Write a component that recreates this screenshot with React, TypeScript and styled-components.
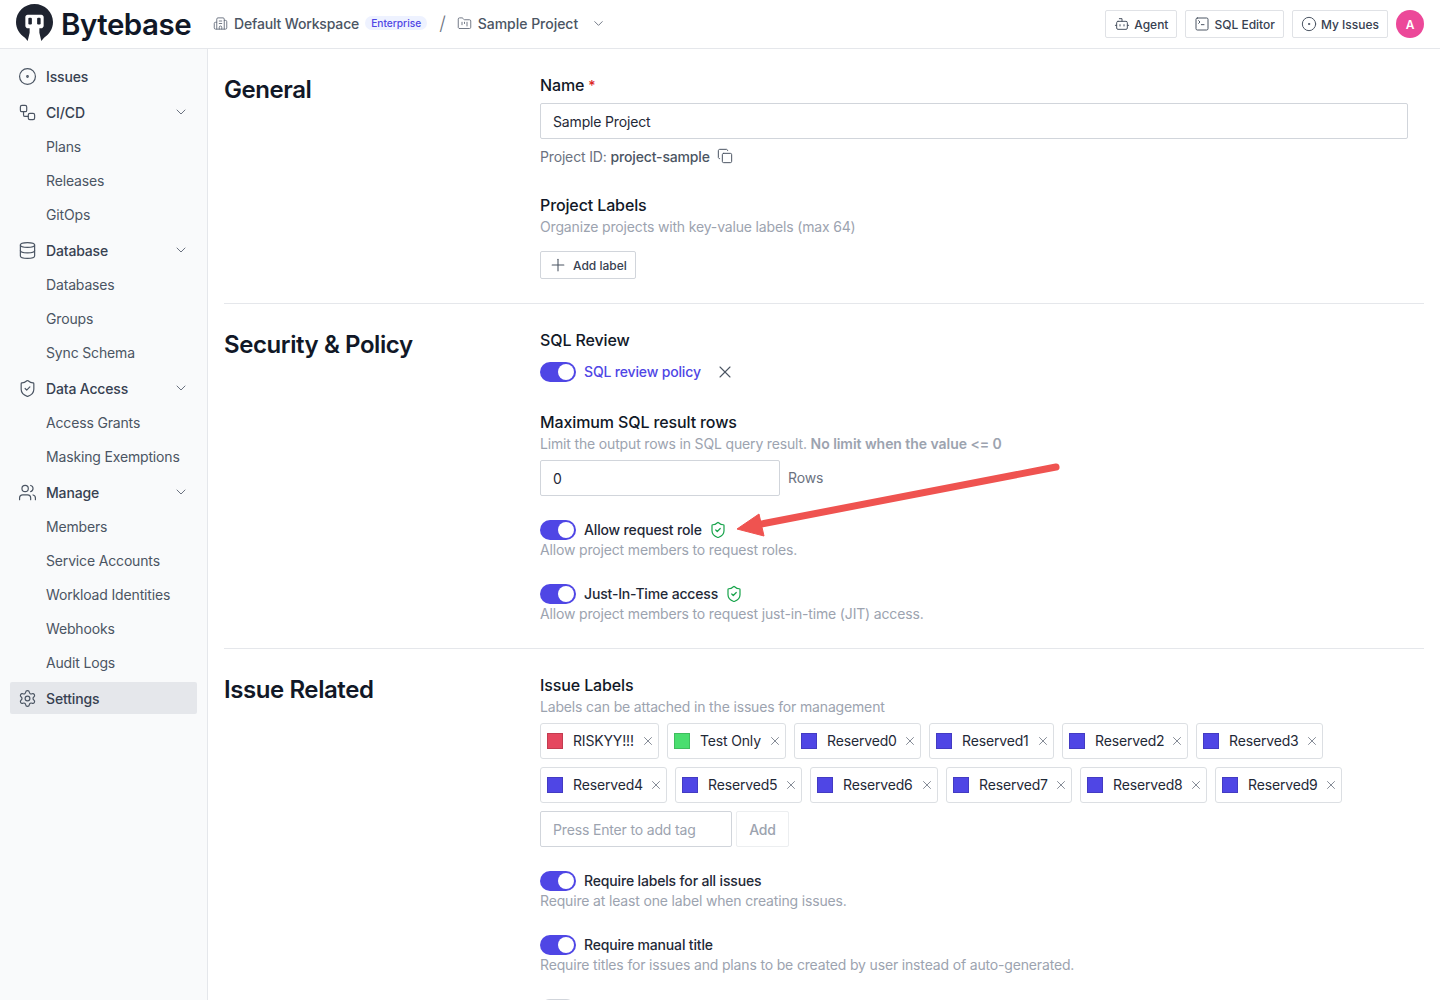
import React from "react";
import styled, { createGlobalStyle } from "styled-components";
import {
  Bot, Building2, ChevronDown, CircleDot, Copy, Database, FolderKanban, Plus,
  Settings as SettingsIcon, ShieldCheck, SquareTerminal, Users, Workflow, X,
} from "lucide-react";

const Global = createGlobalStyle`
  html, body { margin: 0; padding: 0; height: 100%; overflow: hidden; background: #fff; }
  body { font-family: Inter, "Liberation Sans", sans-serif; color: #1f2937; letter-spacing: -0.16px; -webkit-font-smoothing: antialiased; }
  * { box-sizing: border-box; }
`;

const Page = styled.div`
  position: relative;
  height: 1000px;
  width: 1440px;
  overflow: hidden;
  display: flex;
  flex-direction: column;
`;

const Header = styled.header`
  height: 49px;
  flex: none;
  display: flex;
  align-items: center;
  padding: 0 16px;
  border-bottom: 1px solid #e5e7eb;
  background: #fff;
`;

const LogoLink = styled.div`
  display: flex;
  align-items: center;
  width: 197px;
  flex: none;
  svg { margin-bottom: 3px; flex: none; }
`;

const LogoText = styled.span`
  margin-left: 8px;
  font-size: 29.5px;
  font-weight: 600;
  letter-spacing: -0.5px;
  line-height: 36px;
  color: #111827;
`;

const Crumb = styled.div<{ $wide?: boolean }>`
  display: flex;
  align-items: center;
  gap: 6px;
  margin-bottom: 2px;
  font-size: 14px;
  font-weight: 500;
  letter-spacing: ${(p) => (p.$wide ? "-0.02px" : "-0.16px")};
  color: #4b5563;
  white-space: nowrap;
  svg { color: #6b7280; flex: none; }
`;

const PlanBadge = styled.span`
  height: 14px;
  padding: 0 6px;
  border-radius: 7px;
  background: #eef2ff;
  color: #4f46e5;
  font-size: 10.2px;
  letter-spacing: 0;
  font-weight: 500;
  line-height: 14px;
`;

const Slash = styled.span`
  margin: 0 11px 2px 12px;
  font-size: 19px;
  font-weight: 300;
  color: #6b7280;
`;

const CrumbChevron = styled.span`
  display: flex;
  margin-left: 7px;
  color: #9ca3af;
`;

const HeaderActions = styled.div`
  margin-left: auto;
  display: flex;
  align-items: center;
  gap: 8px;
`;

const ActionButton = styled.button`
  height: 28px;
  padding: 0 8px;
  display: flex;
  align-items: center;
  gap: 4px;
  background: #fff;
  border: 1px solid #e0e2e6;
  border-radius: 2px;
  color: #374151;
  font: 500 12px Inter, sans-serif;
  svg { color: #4b5563; flex: none; }
`;

const Avatar = styled.div`
  width: 28px;
  height: 28px;
  border-radius: 50%;
  background: #ec4899;
  color: #fff;
  font-size: 12px;
  font-weight: 600;
  display: flex;
  align-items: center;
  justify-content: center;
`;

const Body = styled.div`
  flex: 1;
  min-height: 0;
  display: flex;
`;

const Sidebar = styled.nav`
  width: 208px;
  flex: none;
  padding: 8px 10px 0;
  background: #f9fafb;
  border-right: 1px solid #e5e7eb;
`;

const NavParent = styled.div<{ $active?: boolean }>`
  height: ${(p) => (p.$active ? 32 : 34)}px;
  margin: ${(p) => (p.$active ? "3px 0 0" : "2px 0 0")};
  padding: 0 8px;
  display: flex;
  align-items: center;
  border-radius: 2px;
  background: ${(p) => (p.$active ? "#e5e7eb" : "transparent")};
  color: #374151;
  font-size: 14px;
  font-weight: 500;
  svg { flex: none; color: #4b5563; }
`;

const NavLabel = styled.span`
  margin-left: 9px;
  flex: 1;
`;

const NavChevron = styled.span`
  display: flex;
  svg { color: #6b7280; }
`;

const NavChild = styled.div`
  height: 34px;
  padding-left: 36px;
  display: flex;
  align-items: center;
  color: #4b5563;
  font-size: 14px;
  font-weight: 400;
`;

const Main = styled.main`
  flex: 1;
  min-width: 0;
  padding: 0 16px;
`;

const Section = styled.section<{ $pad: number; $height: number; $line?: boolean }>`
  display: grid;
  grid-template-columns: 316px 868px;
  align-items: start;
  height: ${(p) => p.$height}px;
  padding-top: ${(p) => p.$pad}px;
  border-bottom: ${(p) => (p.$line ? "1px solid #e5e7eb" : "none")};
`;

const SectionTitle = styled.h1`
  margin: 1px 0 0;
  font-size: 24px;
  line-height: 32px;
  font-weight: 600;
  letter-spacing: -0.42px;
  color: #111827;
`;

const Column = styled.div`
  display: flex;
  flex-direction: column;
  align-items: flex-start;
`;

const Label = styled.div<{ $top?: number }>`
  margin-top: ${(p) => p.$top ?? 0}px;
  font-size: 16px;
  line-height: 24px;
  font-weight: 500;
  letter-spacing: -0.12px;
  color: #111827;
`;

const Required = styled.span`
  margin-left: 4px;
  color: #dc2626;
  font-size: 14px;
`;

const Hint = styled.div`
  font-size: 14px;
  line-height: 20px;
  color: #9ca3af;
  b { font-weight: 600; letter-spacing: -0.05px; }
`;

const TextBox = styled.div<{ $w: number; $top?: number; $muted?: boolean }>`
  width: ${(p) => p.$w}px;
  height: 36px;
  margin-top: ${(p) => p.$top ?? 0}px;
  padding: 0 12px;
  display: flex;
  align-items: center;
  border: 1px solid #d1d5db;
  border-radius: 2px;
  background: #fff;
  font-size: 14px;
  color: ${(p) => (p.$muted ? "#9ca3af" : "#1f2937")};
`;

const IdRow = styled.div`
  margin-top: 7px;
  display: flex;
  align-items: center;
  height: 20px;
  font-size: 14px;
  color: #6b7280;
  b { margin-left: 4px; font-weight: 500; color: #4b5563; }
  svg { margin-left: 7px; color: #4b5563; }
`;

const OutlineButton = styled.button`
  margin-top: 14px;
  width: 96px;
  height: 28px;
  padding: 0 0 0 7px;
  display: flex;
  align-items: center;
  gap: 5px;
  background: #fff;
  border: 1px solid #d1d5db;
  border-radius: 2px;
  font: 500 12px Inter, sans-serif;
  color: #374151;
  svg { color: #4b5563; }
`;

const Track = styled.span`
  position: relative;
  display: inline-block;
  width: 36px;
  height: 20px;
  flex: none;
  border-radius: 10px;
  background: #4f46e5;
  &::after {
    content: "";
    position: absolute;
    top: 2px;
    right: 2px;
    width: 16px;
    height: 16px;
    border-radius: 50%;
    background: #fff;
  }
`;

const ToggleRow = styled.div<{ $top?: number }>`
  margin-top: ${(p) => p.$top ?? 0}px;
  height: 20px;
  display: flex;
  align-items: center;
  font-size: 14px;
  font-weight: 500;
  color: #1f2937;
`;

const ToggleText = styled.span<{ $link?: boolean }>`
  margin: 0 0 2px 8px;
  color: ${(p) => (p.$link ? "#4f46e5" : "#1f2937")};
`;

const Shield = styled.span`
  display: flex;
  margin-left: 7px;
  color: #16a34a;
`;

const Dismiss = styled.span`
  display: flex;
  margin-left: 14px;
  color: #4b5563;
`;

const InputRow = styled.div`
  margin-top: 6px;
  display: flex;
  align-items: center;
  gap: 8px;
`;

const Unit = styled.span`
  margin-bottom: 2px;
  font-size: 14px;
  color: #6b7280;
`;

const TagRows = styled.div`
  margin-top: 6px;
  display: flex;
  flex-wrap: wrap;
  gap: 8px;
  width: 868px;
`;

const Tag = styled.div<{ $w: number }>`
  width: ${(p) => p.$w}px;
  height: 36px;
  padding: 0 3px 0 6px;
  display: flex;
  align-items: center;
  border: 1px solid #dcdfe3;
  border-radius: 3px;
  font-size: 14px;
  color: #1f2937;
  background: #fff;
`;

const Swatch = styled.span<{ $color: string }>`
  width: 16px;
  height: 16px;
  flex: none;
  background: ${(p) => p.$color};
  border: 1px solid rgba(0, 0, 0, 0.15);
`;

const TagName = styled.span`
  margin: 0 0 2px 10px;
  flex: 1;
  white-space: nowrap;
`;

const TagClose = styled.span`
  display: flex;
  color: #6b7280;
`;

const AddRow = styled.div`
  margin-top: 8px;
  display: flex;
  gap: 4px;
`;

const AddButton = styled.div`
  width: 53px;
  height: 36px;
  display: flex;
  align-items: center;
  justify-content: center;
  border: 1px solid #eceef0;
  border-radius: 2px;
  font-size: 14px;
  font-weight: 500;
  color: #9ca3af;
`;

const OffTrack = styled.span`
  display: block;
  margin-top: 24px;
  width: 36px;
  height: 20px;
  border-radius: 10px;
  background: #d1d5db;
`;

const ArrowLayer = styled.svg`
  position: absolute;
  left: 0;
  top: 0;
  pointer-events: none;
`;

const Logo = () => (
  <svg width="37" height="37" viewBox="0 0 38 38" aria-hidden="true">
    <path
      d="M19 0C8.5 0 0 8.3 0 18.6c0 6.8 3.7 12.7 9.2 16L12 38l2-8.6V25h-1.7c-1.5 0-2.7-1.2-2.7-2.7V13.4c0-1.3 1-2.4 2.4-2.4h14c1.3 0 2.4 1 2.4 2.4v8.9c0 1.5-1.2 2.7-2.7 2.7H24v4.4l2 8.6 2.8-3.4c5.5-3.3 9.2-9.2 9.2-16C38 8.3 29.5 0 19 0Z"
      fill="#1f2430"
    />
    <rect x="12.7" y="14" width="3.6" height="7" rx="1.2" fill="#1f2430" />
    <rect x="21.7" y="14" width="3.6" height="7" rx="1.2" fill="#1f2430" />
  </svg>
);

type NavNode = { label: string; icon: React.ReactNode; open?: boolean; active?: boolean; children?: string[] };

const ico = { size: 19, strokeWidth: 1.5 };

const nav: NavNode[] = [
  { label: "Issues", icon: <CircleDot {...ico} /> },
  { label: "CI/CD", icon: <Workflow {...ico} />, open: true, children: ["Plans", "Releases", "GitOps"] },
  { label: "Database", icon: <Database {...ico} />, open: true, children: ["Databases", "Groups", "Sync Schema"] },
  { label: "Data Access", icon: <ShieldCheck {...ico} />, open: true, children: ["Access Grants", "Masking Exemptions"] },
  { label: "Manage", icon: <Users {...ico} />, open: true, children: ["Members", "Service Accounts", "Workload Identities", "Webhooks", "Audit Logs"] },
  { label: "Settings", icon: <SettingsIcon {...ico} />, active: true },
];

const tags: { name: string; color: string; w: number }[] = [
  { name: "RISKYY!!!", color: "#e5475f", w: 119 },
  { name: "Test Only", color: "#4ade6f", w: 119 },
  { name: "Reserved0", color: "#4f46e5", w: 127 },
  { name: "Reserved1", color: "#4f46e5", w: 125 },
  { name: "Reserved2", color: "#4f46e5", w: 126 },
  { name: "Reserved3", color: "#4f46e5", w: 127 },
  { name: "Reserved4", color: "#4f46e5", w: 127 },
  { name: "Reserved5", color: "#4f46e5", w: 127 },
  { name: "Reserved6", color: "#4f46e5", w: 128 },
  { name: "Reserved7", color: "#4f46e5", w: 126 },
  { name: "Reserved8", color: "#4f46e5", w: 127 },
  { name: "Reserved9", color: "#4f46e5", w: 127 },
];

export default function App() {
  return (
    <Page>
      <Global />
      <Header>
        <LogoLink>
          <Logo />
          <LogoText>Bytebase</LogoText>
        </LogoLink>
        <Crumb>
          <Building2 size={15} strokeWidth={1.5} />
          Default Workspace
          <PlanBadge>Enterprise</PlanBadge>
        </Crumb>
        <Slash>/</Slash>
        <Crumb $wide>
          <FolderKanban size={15} strokeWidth={1.5} />
          Sample Project
          <CrumbChevron><ChevronDown size={15} strokeWidth={1.5} /></CrumbChevron>
        </Crumb>
        <HeaderActions>
          <ActionButton><Bot size={16} strokeWidth={1.5} />Agent</ActionButton>
          <ActionButton><SquareTerminal size={16} strokeWidth={1.5} />SQL Editor</ActionButton>
          <ActionButton><CircleDot size={16} strokeWidth={1.5} />My Issues</ActionButton>
          <Avatar>A</Avatar>
        </HeaderActions>
      </Header>
      <Body>
        <Sidebar>
          {nav.map((n) => (
            <React.Fragment key={n.label}>
              <NavParent $active={n.active}>
                {n.icon}
                <NavLabel>{n.label}</NavLabel>
                {n.open && <NavChevron><ChevronDown size={16} strokeWidth={1.5} /></NavChevron>}
              </NavParent>
              {n.children?.map((c) => <NavChild key={c}>{c}</NavChild>)}
            </React.Fragment>
          ))}
        </Sidebar>
        <Main>
          <Section $pad={24} $height={255} $line>
            <SectionTitle>General</SectionTitle>
            <Column>
              <Label>Name<Required>*</Required></Label>
              <TextBox $w={868} $top={5}>Sample Project</TextBox>
              <IdRow>
                Project ID:<b>project-sample</b>
                <Copy size={16} strokeWidth={1.5} />
              </IdRow>
              <Label $top={27}>Project Labels</Label>
              <Hint>Organize projects with key-value labels (max 64)</Hint>
              <OutlineButton><Plus size={20} strokeWidth={1.3} />Add label</OutlineButton>
            </Column>
          </Section>
          <Section $pad={24} $height={345} $line>
            <SectionTitle>Security &amp; Policy</SectionTitle>
            <Column>
              <Label>SQL Review</Label>
              <ToggleRow $top={10}>
                <Track />
                <ToggleText $link>SQL review policy</ToggleText>
                <Dismiss><X size={20} strokeWidth={1.3} /></Dismiss>
              </ToggleRow>
              <Label $top={28}>Maximum SQL result rows</Label>
              <Hint>Limit the output rows in SQL query result. <b>No limit when the value &lt;= 0</b></Hint>
              <InputRow>
                <TextBox $w={240}>0</TextBox>
                <Unit>Rows</Unit>
              </InputRow>
              <ToggleRow $top={24}>
                <Track />
                <ToggleText>Allow request role</ToggleText>
                <Shield><ShieldCheck size={18} strokeWidth={1.6} /></Shield>
              </ToggleRow>
              <Hint>Allow project members to request roles.</Hint>
              <ToggleRow $top={24}>
                <Track />
                <ToggleText>Just-In-Time access</ToggleText>
                <Shield><ShieldCheck size={18} strokeWidth={1.6} /></Shield>
              </ToggleRow>
              <Hint>Allow project members to request just-in-time (JIT) access.</Hint>
            </Column>
          </Section>
          <Section $pad={24} $height={360}>
            <SectionTitle>Issue Related</SectionTitle>
            <Column>
              <Label>Issue Labels</Label>
              <Hint>Labels can be attached in the issues for management</Hint>
              <TagRows>
                {tags.map((t) => (
                  <Tag key={t.name} $w={t.w}>
                    <Swatch $color={t.color} />
                    <TagName>{t.name}</TagName>
                    <TagClose><X size={14} strokeWidth={1.4} /></TagClose>
                  </Tag>
                ))}
              </TagRows>
              <AddRow>
                <TextBox $w={192} $muted>Press Enter to add tag</TextBox>
                <AddButton>Add</AddButton>
              </AddRow>
              <ToggleRow $top={24}>
                <Track />
                <ToggleText>Require labels for all issues</ToggleText>
              </ToggleRow>
              <Hint>Require at least one label when creating issues.</Hint>
              <ToggleRow $top={24}>
                <Track />
                <ToggleText>Require manual title</ToggleText>
              </ToggleRow>
              <Hint>Require titles for issues and plans to be created by user instead of auto-generated.</Hint>
              <OffTrack />
            </Column>
          </Section>
        </Main>
      </Body>
      <ArrowLayer width="1440" height="1000" viewBox="0 0 1440 1000" aria-hidden="true">
        <path d="M1056 467 L756 525" stroke="#ef5350" strokeWidth="7" strokeLinecap="round" fill="none" />
        <path d="M737 529 L759 514 L764 536 Z" fill="#ef5350" stroke="#ef5350" strokeWidth="1" strokeLinejoin="round" />
      </ArrowLayer>
    </Page>
  );
}
